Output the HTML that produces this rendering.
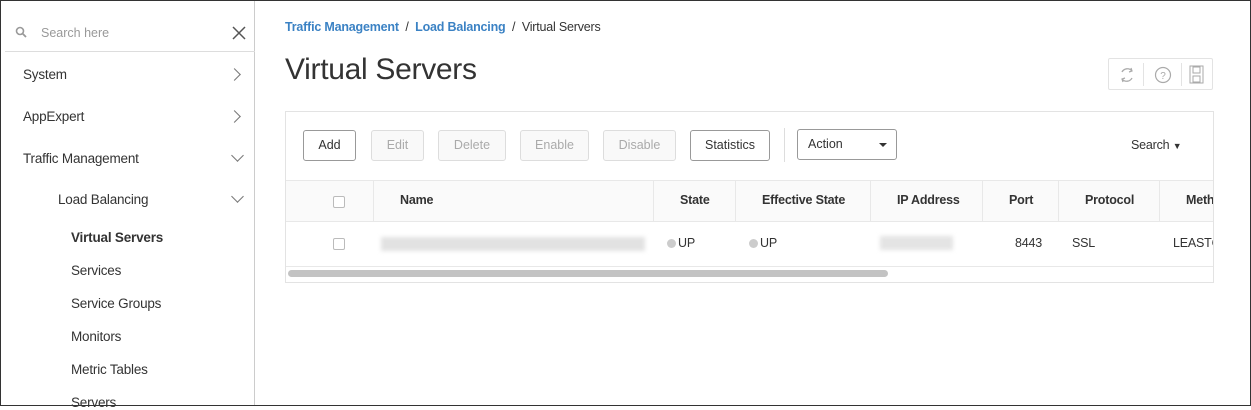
<!DOCTYPE html>
<html><head><style>
*{box-sizing:border-box;margin:0;padding:0}
body{width:1251px;height:406px;overflow:hidden;background:#fff;font-family:"Liberation Sans",sans-serif;color:#333;position:relative}
.frame{position:absolute;inset:0;border:1px solid #333;pointer-events:none}
.side{position:absolute;left:1px;top:1px;width:254px;height:404px;border-right:1px solid #ccc;background:#fff}
.srch{position:absolute;left:4px;top:14px;width:250px;height:37px;border-bottom:1px solid #ddd}
.srch span{position:absolute;left:36px;top:11px;font-size:12.5px;color:#999}
.item{position:absolute;font-size:13.5px;color:#333;letter-spacing:-0.2px}
.chev{position:absolute;left:232px;width:9px;height:9px;border-right:1.3px solid #777;border-bottom:1.3px solid #777}
.r{transform:rotate(-45deg)}.d{transform:rotate(45deg)}
.bc{position:absolute;left:285px;top:20px;font-size:12.5px;color:#333;letter-spacing:-0.2px}
.bc a{color:#3b82c4;font-weight:bold;text-decoration:none}
h1{position:absolute;left:285px;top:53px;font-size:30px;font-weight:normal;color:#333;letter-spacing:-0.3px}
.tools{position:absolute;left:1108px;top:58px;width:105px;height:32px;border:1px solid #e3e3e3;border-radius:2px}
.panel{position:absolute;left:285px;top:111px;width:929px;height:172px;border:1px solid #e3e3e3}
.btn{position:absolute;top:130px;height:31px;border:1px solid #999;border-radius:3px;font-size:12.5px;text-align:center;line-height:29px;background:#fff;color:#333}
.dis{border-color:#ddd;color:#aaa;background:#f9f9f9}
.th{position:absolute;top:180px;height:42px;left:286px;width:927px;background:#fafafa;border-top:1px solid #e8e8e8;border-bottom:1px solid #e8e8e8}
.c{position:absolute;font-size:12.5px;letter-spacing:-0.2px}
.b{font-weight:bold}
.sep{position:absolute;top:180px;height:42px;width:1px;background:#e8e8e8}
.cb{position:absolute;width:12px;height:12px;border:1px solid #bbb;border-radius:2px;background:#fff}
.dot{display:inline-block;width:9px;height:9px;border-radius:50%;background:#ccc;margin-right:2px;vertical-align:-1px}
</style></head><body>
<div class="side">
<div class="srch"><svg style="position:absolute;left:10px;top:11px" width="12" height="12"><circle cx="5" cy="5" r="3.5" stroke="#999" stroke-width="1.6" fill="none"/><line x1="7.5" y1="7.5" x2="11" y2="11" stroke="#999" stroke-width="1.8"/></svg><span>Search here</span>
<svg style="position:absolute;left:227px;top:11px" width="14" height="14"><path d="M1 1L13 13M13 1L1 13" stroke="#555" stroke-width="1.5"/></svg></div>
<div class="item" style="left:22px;top:66px">System</div><div class="chev r" style="top:69px;left:229px"></div>
<div class="item" style="left:22px;top:108px">AppExpert</div><div class="chev r" style="top:111px;left:229px"></div>
<div class="item" style="left:22px;top:150px">Traffic Management</div><div class="chev d" style="top:150px"></div>
<div class="item" style="left:57px;top:191px">Load Balancing</div><div class="chev d" style="top:191px"></div>
<div class="item b" style="left:70px;top:229px">Virtual Servers</div>
<div class="item" style="left:70px;top:262px">Services</div>
<div class="item" style="left:70px;top:295px">Service Groups</div>
<div class="item" style="left:70px;top:328px">Monitors</div>
<div class="item" style="left:70px;top:361px">Metric Tables</div>
<div class="item" style="left:70px;top:394px">Servers</div>
</div>
<div class="bc"><a>Traffic Management</a> &nbsp;/&nbsp; <a>Load Balancing</a> &nbsp;/&nbsp; Virtual Servers</div>
<h1>Virtual Servers</h1>
<div class="tools">
<svg style="position:absolute;left:9px;top:7px" width="18" height="18"><path d="M4 6A6 6 0 0 1 14 5M14 12A6 6 0 0 1 4 13" stroke="#aaa" stroke-width="1.3" fill="none"/><path d="M13 2L14 5L11 6M5 16L4 13L7 12" stroke="#aaa" stroke-width="1.2" fill="none"/></svg>
<div style="position:absolute;left:34px;top:4px;width:1px;height:23px;background:#e3e3e3"></div>
<svg style="position:absolute;left:45px;top:7px" width="18" height="18"><circle cx="9" cy="9" r="7.5" stroke="#aaa" stroke-width="1.2" fill="none"/><text x="9" y="13" font-size="10" text-anchor="middle" fill="#aaa" font-family="Liberation Sans">?</text></svg>
<div style="position:absolute;left:72px;top:4px;width:1px;height:23px;background:#e3e3e3"></div>
<svg style="position:absolute;left:80px;top:6px" width="16" height="20"><rect x="1" y="1" width="13" height="17" stroke="#aaa" fill="none"/><rect x="4" y="2" width="7" height="6" stroke="#aaa" fill="none"/><rect x="4" y="11" width="7" height="6" stroke="#aaa" fill="none"/></svg>
</div>
<div class="panel"></div>
<div class="btn" style="left:303px;width:53px">Add</div>
<div class="btn dis" style="left:371px;width:53px">Edit</div>
<div class="btn dis" style="left:438px;width:68px">Delete</div>
<div class="btn dis" style="left:520px;width:69px">Enable</div>
<div class="btn dis" style="left:603px;width:73px">Disable</div>
<div class="btn" style="left:690px;width:80px">Statistics</div>
<div style="position:absolute;left:784px;top:128px;width:1px;height:34px;background:#ddd"></div>
<div class="btn" style="left:797px;width:100px;top:129px;text-align:left;padding-left:10px">Action<span style="position:absolute;left:81px;top:13px;border:4px solid transparent;border-top-color:#333"></span></div>
<div class="c" style="left:1131px;top:138px">Search <span style="font-size:9px">▼</span></div>
<div class="th"></div>
<div class="sep" style="left:373px"></div><div class="sep" style="left:653px"></div><div class="sep" style="left:735px"></div><div class="sep" style="left:870px"></div><div class="sep" style="left:982px"></div><div class="sep" style="left:1058px"></div><div class="sep" style="left:1159px"></div>
<div class="cb" style="left:333px;top:196px"></div>
<div class="c b" style="left:400px;top:193px">Name</div>
<div class="c b" style="left:680px;top:193px">State</div>
<div class="c b" style="left:762px;top:193px">Effective State</div>
<div class="c b" style="left:897px;top:193px">IP Address</div>
<div class="c b" style="left:1009px;top:193px">Port</div>
<div class="c b" style="left:1085px;top:193px">Protocol</div>
<div class="c b" style="left:1186px;top:193px;width:27px;overflow:hidden;white-space:nowrap">Method</div>
<div class="cb" style="left:333px;top:238px"></div>
<div style="position:absolute;left:381px;top:237px;width:264px;height:14px;background:#e2e2e2;filter:blur(2px)"></div>
<div class="c" style="left:667px;top:236px"><span class="dot"></span>UP</div>
<div class="c" style="left:749px;top:236px"><span class="dot"></span>UP</div>
<div style="position:absolute;left:880px;top:236px;width:73px;height:14px;background:#e4e4e4;filter:blur(2px)"></div>
<div class="c" style="left:1015px;top:236px">8443</div>
<div class="c" style="left:1072px;top:236px">SSL</div>
<div class="c" style="left:1173px;top:236px;width:40px;overflow:hidden;white-space:nowrap">LEASTCONN</div>
<div style="position:absolute;left:286px;top:266px;width:927px;height:1px;background:#e8e8e8"></div>
<div style="position:absolute;left:288px;top:270px;width:600px;height:7px;border-radius:4px;background:#c3c3c3"></div>
<div class="frame"></div>
</body></html>
